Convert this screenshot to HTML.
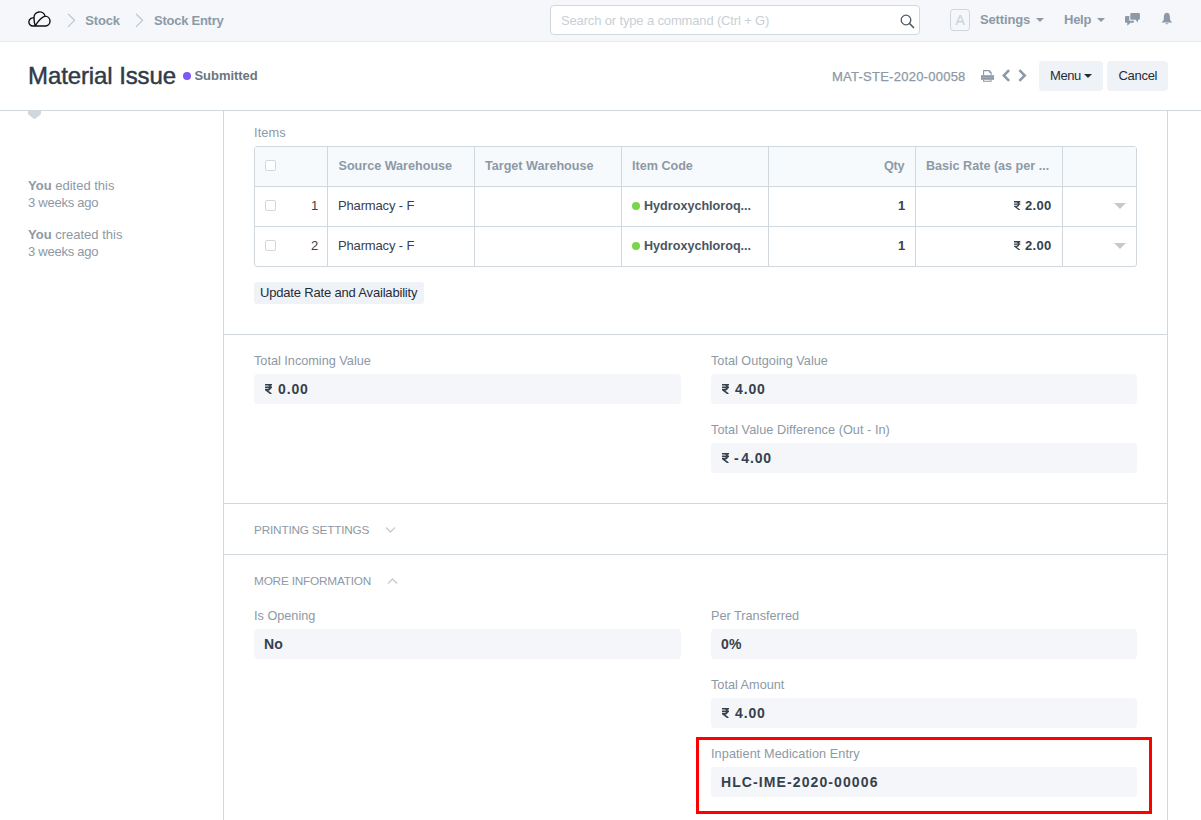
<!DOCTYPE html>
<html><head><meta charset="utf-8">
<style>
*{box-sizing:border-box;margin:0;padding:0}
html,body{width:1201px;height:820px;overflow:hidden;background:#fff;font-family:"Liberation Sans", sans-serif}
.a{position:absolute}
.t{position:absolute;white-space:nowrap}
.t b{font-weight:bold}
</style></head><body>
<div class="a" style="left:0px;top:0px;width:1201px;height:41px;background:#f5f7fa"></div>
<div class="a" style="left:0px;top:41px;width:1201px;height:1px;background:#e6eaed"></div>
<svg class="a" style="left:28px;top:9px" width="25" height="20" viewBox="0 0 25 20"><path d="M7.2 17H5.1A4.05 4.05 0 1 1 6.0 9.05 M7.2 17C6.5 14.5 6.0 11.5 6.0 8.5A5.6 5.6 0 0 1 17.02 7.08A5 5 0 0 1 17.9 17H7.2 M7.2 17C9.5 13 12.5 8.5 17.02 7.08" fill="none" stroke="#111" stroke-width="1.4" stroke-linejoin="round"/></svg>
<svg class="a" style="left:67px;top:13px" width="9" height="15" viewBox="0 0 9 15"><path d="M1 0.8L7.5 7.3L1 13.8" fill="none" stroke="#b9c3cc" stroke-width="1.2"/></svg>
<div class="t" style="left:85.3px;top:11px;font-size:13px;line-height:20px;color:#8d99a6;font-weight:bold;letter-spacing:-0.2px">Stock</div>
<svg class="a" style="left:135px;top:13px" width="9" height="15" viewBox="0 0 9 15"><path d="M1 0.8L7.5 7.3L1 13.8" fill="none" stroke="#b9c3cc" stroke-width="1.2"/></svg>
<div class="t" style="left:154px;top:11px;font-size:13px;line-height:20px;color:#8d99a6;font-weight:bold;letter-spacing:-0.25px">Stock Entry</div>
<div class="a" style="left:550px;top:5px;width:370px;height:30px;background:#fff;border:1px solid #d1d8dd;border-radius:4px"></div>
<div class="t" style="left:561px;top:11px;font-size:13px;line-height:20px;color:#c8d0d6;letter-spacing:-0.15px">Search or type a command (Ctrl + G)</div>
<svg class="a" style="left:900px;top:14px" width="15" height="15" viewBox="0 0 15 15"><circle cx="6" cy="6" r="4.8" fill="none" stroke="#4f5b66" stroke-width="1.3"/><path d="M9.5 9.5L13.5 13.5" stroke="#4f5b66" stroke-width="1.7" stroke-linecap="round"/></svg>
<div class="a" style="left:950px;top:9px;width:20px;height:22px;border:1px solid #d1d8dd;border-radius:3px"></div>
<div class="t" style="left:955.5px;top:10px;font-size:14px;line-height:20px;color:#c8d0d6">A</div>
<div class="t" style="left:980px;top:10px;font-size:13px;line-height:20px;color:#8d99a6;font-weight:bold;letter-spacing:-0.15px">Settings</div>
<svg class="a" style="left:1036px;top:18px" width="8" height="5" viewBox="0 0 8 5"><path d="M0 0H8L4 4Z" fill="#8d99a6"/></svg>
<div class="t" style="left:1064px;top:10px;font-size:13px;line-height:20px;color:#8d99a6;font-weight:bold;letter-spacing:-0.25px">Help</div>
<svg class="a" style="left:1097px;top:18px" width="8" height="5" viewBox="0 0 8 5"><path d="M0 0H8L4 4Z" fill="#8d99a6"/></svg>
<svg class="a" style="left:1125px;top:13px" width="16" height="13" viewBox="0 0 16 13"><path d="M6.3 0H13.9Q14.9 0 14.9 1V5.7Q14.9 6.7 13.9 6.7H13.2L12.6 9.5L10.6 6.7H6.3Q5.3 6.7 5.3 5.7V1Q5.3 0 6.3 0Z M1 3H4.3V7.7H9V8.8Q9 9.8 8 9.8H5.5L2.3 12.7V9.8H1Q0 9.8 0 8.8V4Q0 3 1 3Z" fill="#8d99a6"/></svg>
<svg class="a" style="left:1161px;top:12px" width="12" height="13" viewBox="0 0 12 13"><path d="M5.9 0.7C7.7 0.7 8.8 2.2 8.9 4.4L9.1 7.4C9.3 8.6 10.4 9.6 11.4 10.4V10.6H0.4V10.4C1.4 9.6 2.5 8.6 2.7 7.4L2.9 4.4C3 2.2 4.1 0.7 5.9 0.7Z M4.4 11.3H7.4C7.2 12.7 4.6 12.7 4.4 11.3Z" fill="#8d99a6"/></svg>
<div class="a" style="left:0px;top:110px;width:1201px;height:1px;background:#d1d8dd"></div>
<div class="t" style="left:28px;top:61px;font-size:24px;line-height:30px;color:#2f3b47;letter-spacing:-0.1px;-webkit-text-stroke:0.45px #2f3b47">Material Issue</div>
<div class="a" style="left:183px;top:72px;width:8px;height:8px;background:#7c5af5;border-radius:50%"></div>
<div class="t" style="left:194.5px;top:66px;font-size:13px;line-height:20px;color:#6c7680;font-weight:bold;letter-spacing:-0.05px">Submitted</div>
<div class="t" style="left:832px;top:67px;font-size:13px;line-height:20px;color:#8d99a6;letter-spacing:0.25px;-webkit-text-stroke:0.25px #8d99a6">MAT-STE-2020-00058</div>
<svg class="a" style="left:980px;top:69px" width="15" height="14" viewBox="0 0 15 14"><path d="M3.6 6V1.6H9.2L11.1 3.5V6" fill="none" stroke="#8d99a6" stroke-width="1.1"/><path d="M9 1.5V3.7H11.2Z" fill="#8d99a6"/><path d="M1 6.2H14V10.8H1Z" fill="#8d99a6"/><path d="M1.5 8.6H13.5" stroke="#b3bdc7" stroke-width="0.5"/><path d="M3.6 10.8V12.3H11V10.8" fill="none" stroke="#8d99a6" stroke-width="1.1"/></svg>
<svg class="a" style="left:1000px;top:68px" width="30" height="16" viewBox="0 0 30 16"><path d="M2 7.5L8.2 1.3L10 3.1L5.6 7.5L10 11.9L8.2 13.7Z M26.5 7.5L20.3 1.3L18.5 3.1L22.9 7.5L18.5 11.9L20.3 13.7Z" fill="#8d99a6"/></svg>
<div class="a" style="left:1039px;top:61px;width:64px;height:30px;background:#eff2f6;border-radius:4px"></div>
<div class="t" style="left:1050px;top:66px;font-size:13px;line-height:20px;color:#1f2d3a;letter-spacing:-0.4px">Menu</div>
<svg class="a" style="left:1084px;top:74px" width="8" height="5" viewBox="0 0 8 5"><path d="M0 0H8L4 4Z" fill="#1f2d3a"/></svg>
<div class="a" style="left:1107px;top:61px;width:61px;height:30px;background:#eff2f6;border-radius:4px"></div>
<div class="t" style="left:1118.5px;top:66px;font-size:13px;line-height:20px;color:#1f2d3a;letter-spacing:-0.3px">Cancel</div>
<div class="a" style="left:223px;top:111px;width:1px;height:709px;background:#d1d8dd"></div>
<div class="a" style="left:1167px;top:111px;width:1px;height:709px;background:#d1d8dd"></div>
<svg class="a" style="left:28px;top:110px" width="13" height="9" viewBox="0 0 13 9"><path d="M0 0H13V3C13 4 12.5 4.6 11.8 5.2L7.6 8.4C7 8.9 6 8.9 5.4 8.4L1.2 5.2C0.5 4.6 0 4 0 3Z" fill="#d1d8dd"/></svg>
<div class="t" style="left:28px;top:176px;font-size:13px;line-height:20px;color:#8d99a6"><b>You</b> edited this</div>
<div class="t" style="left:28px;top:193px;font-size:13px;line-height:20px;color:#8d99a6;letter-spacing:-0.25px">3 weeks ago</div>
<div class="t" style="left:28px;top:225px;font-size:13px;line-height:20px;color:#8d99a6"><b>You</b> created this</div>
<div class="t" style="left:28px;top:242px;font-size:13px;line-height:20px;color:#8d99a6;letter-spacing:-0.25px">3 weeks ago</div>
<div class="t" style="left:254px;top:123px;font-size:12.8px;line-height:20px;color:#8d99a6;letter-spacing:0.1px">Items</div>
<div class="a" style="left:254px;top:146px;width:883px;height:121px;border:1px solid #d1d8dd;border-radius:3px;overflow:hidden"></div>
<div class="a" style="left:255px;top:147px;width:881px;height:39px;background:#f7fafc"></div>
<div class="a" style="left:255px;top:186px;width:881px;height:1px;background:#d1d8dd"></div>
<div class="a" style="left:255px;top:226px;width:881px;height:1px;background:#d1d8dd"></div>
<div class="a" style="left:327px;top:147px;width:1px;height:119px;background:#d1d8dd"></div>
<div class="a" style="left:474px;top:147px;width:1px;height:119px;background:#d1d8dd"></div>
<div class="a" style="left:621px;top:147px;width:1px;height:119px;background:#d1d8dd"></div>
<div class="a" style="left:768px;top:147px;width:1px;height:119px;background:#d1d8dd"></div>
<div class="a" style="left:915px;top:147px;width:1px;height:119px;background:#d1d8dd"></div>
<div class="a" style="left:1062px;top:147px;width:1px;height:119px;background:#d1d8dd"></div>
<div class="a" style="left:265px;top:160px;width:11px;height:11px;border:1px solid #d1d8dd;border-radius:2px;background:#fff"></div>
<div class="a" style="left:265px;top:200px;width:11px;height:11px;border:1px solid #d1d8dd;border-radius:2px;background:#fff"></div>
<div class="a" style="left:265px;top:240px;width:11px;height:11px;border:1px solid #d1d8dd;border-radius:2px;background:#fff"></div>
<div class="t" style="left:338.5px;top:156px;font-size:12.6px;line-height:20px;color:#8d99a6;font-weight:bold">Source Warehouse</div>
<div class="t" style="left:485px;top:156px;font-size:12.6px;line-height:20px;color:#8d99a6;font-weight:bold">Target Warehouse</div>
<div class="t" style="left:632px;top:156px;font-size:12.6px;line-height:20px;color:#8d99a6;font-weight:bold">Item Code</div>
<div class="t" style="left:884px;top:156px;font-size:12.6px;line-height:20px;color:#8d99a6;font-weight:bold;letter-spacing:-0.2px">Qty</div>
<div class="t" style="left:926px;top:156px;font-size:12.6px;line-height:20px;color:#8d99a6;font-weight:bold">Basic Rate (as per ...</div>
<div class="t" style="left:311px;top:196px;font-size:13px;line-height:20px;color:#36414c">1</div>
<div class="t" style="left:338px;top:196px;font-size:13px;line-height:20px;color:#36414c;letter-spacing:-0.15px">Pharmacy - F</div>
<div class="a" style="left:632px;top:202px;width:8px;height:8px;background:#78d64b;border-radius:50%"></div>
<div class="t" style="left:644px;top:196px;font-size:12.6px;line-height:20px;color:#4a5561;font-weight:bold">Hydroxychloroq...</div>
<div class="t" style="left:898px;top:196px;font-size:13px;line-height:20px;color:#36414c;font-weight:bold">1</div>
<svg class="a" style="left:1013.5px;top:201px" width="7" height="9" viewBox="0 0 7 9"><g fill="none" stroke="#36414c" stroke-width="1.5" transform="scale(0.9)"><path d="M0 0.8H7M0 3.4H7M0.3 0.8H2.6C6.2 0.8 6.2 5.9 2.6 5.9H0.8L6.3 10"/></g></svg>
<div class="t" style="left:1025px;top:196px;font-size:13px;line-height:20px;color:#36414c;font-weight:bold;letter-spacing:0.3px">2.00</div>
<svg class="a" style="left:1114px;top:203px" width="12" height="6" viewBox="0 0 12 6"><path d="M0 0H12L6 6Z" fill="#c6c9cc"/></svg>
<div class="t" style="left:311px;top:236px;font-size:13px;line-height:20px;color:#36414c">2</div>
<div class="t" style="left:338px;top:236px;font-size:13px;line-height:20px;color:#36414c;letter-spacing:-0.15px">Pharmacy - F</div>
<div class="a" style="left:632px;top:242px;width:8px;height:8px;background:#78d64b;border-radius:50%"></div>
<div class="t" style="left:644px;top:236px;font-size:12.6px;line-height:20px;color:#4a5561;font-weight:bold">Hydroxychloroq...</div>
<div class="t" style="left:898px;top:236px;font-size:13px;line-height:20px;color:#36414c;font-weight:bold">1</div>
<svg class="a" style="left:1013.5px;top:241px" width="7" height="9" viewBox="0 0 7 9"><g fill="none" stroke="#36414c" stroke-width="1.5" transform="scale(0.9)"><path d="M0 0.8H7M0 3.4H7M0.3 0.8H2.6C6.2 0.8 6.2 5.9 2.6 5.9H0.8L6.3 10"/></g></svg>
<div class="t" style="left:1025px;top:236px;font-size:13px;line-height:20px;color:#36414c;font-weight:bold;letter-spacing:0.3px">2.00</div>
<svg class="a" style="left:1114px;top:243px" width="12" height="6" viewBox="0 0 12 6"><path d="M0 0H12L6 6Z" fill="#c6c9cc"/></svg>
<div class="a" style="left:254px;top:282px;width:170px;height:22px;background:#eff2f6;border-radius:3px"></div>
<div class="t" style="left:260px;top:283px;font-size:13px;line-height:20px;color:#1f2d3a;letter-spacing:-0.18px">Update Rate and Availability</div>
<div class="a" style="left:224px;top:334px;width:943px;height:1px;background:#d1d8dd"></div>
<div class="t" style="left:254px;top:351px;font-size:12.7px;line-height:20px;color:#8d99a6">Total Incoming Value</div>
<div class="a" style="left:254px;top:374px;width:427px;height:29.5px;background:#f4f6f9;border-radius:4px"></div>
<svg class="a" style="left:265px;top:384px" width="8" height="10" viewBox="0 0 8 10"><g fill="none" stroke="#36414c" stroke-width="1.6" transform="scale(1.0)"><path d="M0 0.8H7M0 3.4H7M0.3 0.8H2.6C6.2 0.8 6.2 5.9 2.6 5.9H0.8L6.3 10"/></g></svg>
<div class="t" style="left:278px;top:379px;font-size:14px;line-height:20px;color:#36414c;font-weight:bold;letter-spacing:0.85px">0.00</div>
<div class="t" style="left:711px;top:351px;font-size:12.7px;line-height:20px;color:#8d99a6">Total Outgoing Value</div>
<div class="a" style="left:711px;top:374px;width:426px;height:29.5px;background:#f4f6f9;border-radius:4px"></div>
<svg class="a" style="left:721.5px;top:384px" width="8" height="10" viewBox="0 0 8 10"><g fill="none" stroke="#36414c" stroke-width="1.6" transform="scale(1.0)"><path d="M0 0.8H7M0 3.4H7M0.3 0.8H2.6C6.2 0.8 6.2 5.9 2.6 5.9H0.8L6.3 10"/></g></svg>
<div class="t" style="left:735px;top:379px;font-size:14px;line-height:20px;color:#36414c;font-weight:bold;letter-spacing:0.85px">4.00</div>
<div class="t" style="left:711px;top:420px;font-size:12.7px;line-height:20px;color:#8d99a6;letter-spacing:0.05px">Total Value Difference (Out - In)</div>
<div class="a" style="left:711px;top:443px;width:426px;height:29.5px;background:#f4f6f9;border-radius:4px"></div>
<svg class="a" style="left:722px;top:453px" width="8" height="10" viewBox="0 0 8 10"><g fill="none" stroke="#36414c" stroke-width="1.6" transform="scale(1.0)"><path d="M0 0.8H7M0 3.4H7M0.3 0.8H2.6C6.2 0.8 6.2 5.9 2.6 5.9H0.8L6.3 10"/></g></svg>
<div class="t" style="left:734px;top:448px;font-size:14px;line-height:20px;color:#36414c;font-weight:bold;letter-spacing:0.85px"><span style="letter-spacing:2.6px">-</span>4.00</div>
<div class="a" style="left:224px;top:503px;width:943px;height:1px;background:#d1d8dd"></div>
<div class="t" style="left:254px;top:520px;font-size:11.8px;line-height:20px;color:#8d99a6;letter-spacing:-0.2px">PRINTING SETTINGS</div>
<svg class="a" style="left:385px;top:526px" width="11" height="8" viewBox="0 0 11 8"><path d="M1 1.5L5.5 6L10 1.5" fill="none" stroke="#c4ccd3" stroke-width="1.4"/></svg>
<div class="a" style="left:224px;top:554px;width:943px;height:1px;background:#d1d8dd"></div>
<div class="t" style="left:254px;top:571px;font-size:11.8px;line-height:20px;color:#8d99a6;letter-spacing:-0.2px">MORE INFORMATION</div>
<svg class="a" style="left:387px;top:577px" width="11" height="8" viewBox="0 0 11 8"><path d="M1 6.5L5.5 2L10 6.5" fill="none" stroke="#c4ccd3" stroke-width="1.4"/></svg>
<div class="t" style="left:254px;top:606px;font-size:12.7px;line-height:20px;color:#8d99a6">Is Opening</div>
<div class="a" style="left:254px;top:629px;width:427px;height:29.5px;background:#f4f6f9;border-radius:4px"></div>
<div class="t" style="left:264px;top:634px;font-size:14px;line-height:20px;color:#36414c;font-weight:bold;letter-spacing:0.2px">No</div>
<div class="t" style="left:711px;top:606px;font-size:12.7px;line-height:20px;color:#8d99a6">Per Transferred</div>
<div class="a" style="left:711px;top:629px;width:426px;height:29.5px;background:#f4f6f9;border-radius:4px"></div>
<div class="t" style="left:721px;top:634px;font-size:14px;line-height:20px;color:#36414c;font-weight:bold;letter-spacing:0.2px">0%</div>
<div class="t" style="left:711px;top:675px;font-size:12.7px;line-height:20px;color:#8d99a6">Total Amount</div>
<div class="a" style="left:711px;top:698px;width:426px;height:29.5px;background:#f4f6f9;border-radius:4px"></div>
<svg class="a" style="left:721.5px;top:708px" width="8" height="10" viewBox="0 0 8 10"><g fill="none" stroke="#36414c" stroke-width="1.6" transform="scale(1.0)"><path d="M0 0.8H7M0 3.4H7M0.3 0.8H2.6C6.2 0.8 6.2 5.9 2.6 5.9H0.8L6.3 10"/></g></svg>
<div class="t" style="left:735px;top:703px;font-size:14px;line-height:20px;color:#36414c;font-weight:bold;letter-spacing:0.85px">4.00</div>
<div class="t" style="left:711px;top:744px;font-size:12.7px;line-height:20px;color:#8d99a6;letter-spacing:0.08px">Inpatient Medication Entry</div>
<div class="a" style="left:711px;top:767px;width:426px;height:29.5px;background:#f4f6f9;border-radius:4px"></div>
<div class="t" style="left:721px;top:772px;font-size:14px;line-height:20px;color:#36414c;font-weight:bold;letter-spacing:1.1px">HLC-IME-2020-00006</div>
<div class="a" style="left:696px;top:737px;width:456px;height:77px;border:3px solid #ff0000"></div>
</body></html>
